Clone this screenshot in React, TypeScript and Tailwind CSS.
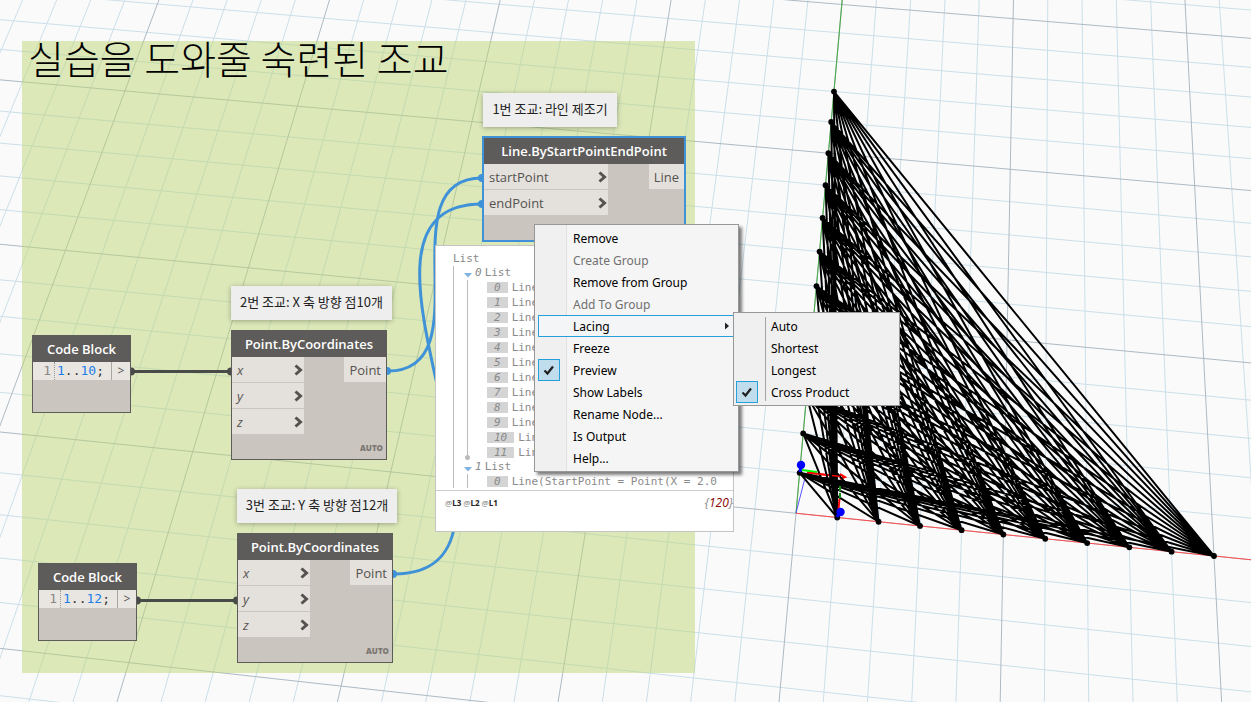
import type { ReactNode } from "react";

type Pt = [number, number];

/* ---------- 3D preview: ground plane projected into screen space ---------- */

function project(x: number, y: number): Pt {
  const w = 1 - 0.001547 * x + 0.01405 * y;
  return [
    (796 + 39.92 * x + 14.88 * y) / w,
    (513.3 + 3.41 * x - 33.86 * y) / w,
  ];
}

function range(from: number, to: number): number[] {
  return Array.from({ length: to - from + 1 }, (_, i) => from + i);
}

function segment(a: Pt, b: Pt): string {
  return `M${a[0].toFixed(2)} ${a[1].toFixed(2)}L${b[0].toFixed(2)} ${b[1].toFixed(2)}`;
}

const columns = range(-34, 18);
const rows = range(-12, 22);
const columnPath = (x: number) => segment(project(x, -12), project(x, 22));
const rowPath = (y: number) => segment(project(-34, y), project(18, y));

const minorGrid = [
  ...columns.filter((x) => x % 5 !== 0).map(columnPath),
  ...rows.filter((y) => y % 5 !== 0).map(rowPath),
].join("");
const majorGrid = [
  ...columns.filter((x) => x % 5 === 0).map(columnPath),
  ...rows.filter((y) => y % 5 === 0).map(rowPath),
].join("");

const startPoints = range(1, 10).map((x) => project(x, 0));
const endPoints = range(1, 12).map((y) => project(0, y));
const latticePath = startPoints
  .flatMap((a) => endPoints.map((b) => segment(a, b)))
  .join("");

function Scene() {
  return (
    <svg className="absolute inset-0 size-full" aria-hidden="true">
      <path d={minorGrid} stroke="#cbdfea" strokeWidth="1" fill="none" />
      <path d={majorGrid} stroke="#adbac3" strokeWidth="1" fill="none" />
      <path d={segment(project(0, 0), project(0, 22))} stroke="#4caa4c" strokeWidth="1.1" />
      <path d={segment(project(0, 0), project(18, 0))} stroke="#ff4d4d" strokeWidth="1.1" />
      <path d="M796 513L806 474" stroke="#5555ff" strokeWidth="1" />
      <path d="M807 472.5L841 476.5M840 474L845 477L840 479" stroke="#ff0000" strokeWidth="2" fill="none" />
      <path d={latticePath} stroke="#000" strokeWidth="2" fill="none" />
      {[...startPoints, ...endPoints].map(([x, y], i) => (
        <circle key={i} cx={x} cy={y} r="2.9" fill="#000" />
      ))}
      <path d="M802 470L817 472" stroke="#00ff00" strokeWidth="2.2" />
      <path d="M809 472.7L826 475M832 475.500L845 477" stroke="#ff0000" strokeWidth="1.4" strokeDasharray="8 2" />
      <path d="M840 486V498" stroke="#118811" strokeWidth="2" strokeDasharray="5 2" />
      <path d="M839.500 499L838.500 509" stroke="#ff0000" strokeWidth="2" />
      <path d="M801 465L800 472M840 512L837 517" stroke="#0000ff" strokeWidth="3" />
      <circle cx="801" cy="465" r="4.200" fill="#0000ff" />
      <circle cx="840.500" cy="512" r="4.200" fill="#0000ff" />
    </svg>
  );
}

/* ---------- Connectors ---------- */

function Wires() {
  return (
    <svg className="absolute inset-0 size-full" fill="none" aria-hidden="true">
      <g stroke="#484b48" strokeWidth="3">
        <path d="M131 371.500H231" />
        <path d="M137 600.500H237" />
      </g>
      <g fill="#484b48">
        <circle cx="131" cy="371.500" r="4" />
        <circle cx="231" cy="371.500" r="4" />
        <circle cx="137" cy="600.500" r="4" />
        <circle cx="237" cy="600.500" r="4" />
      </g>
      <g stroke="#4092d8" strokeWidth="3">
        <path d="M388 371C485 371 385 178 482 178" />
        <path d="M394 574C565 574 311 204 482 204" />
      </g>
      <g fill="#4092d8">
        <circle cx="387" cy="371" r="4" />
        <circle cx="482" cy="178" r="4" />
        <circle cx="393" cy="574" r="4" />
        <circle cx="482" cy="204" r="4" />
      </g>
    </svg>
  );
}

/* ---------- Nodes ---------- */

function Chevron() {
  return (
    <svg width="9" height="12" viewBox="0 0 9 12" fill="none" aria-hidden="true">
      <path d="M1.500 1.500L6.500 6L1.500 10.500" stroke="#555250" strokeWidth="3" />
    </svg>
  );
}

function NodeTitle({ children }: { children: ReactNode }) {
  return (
    <h2 className="flex h-[26px] items-center justify-center bg-[#5e5c5a] pt-[2px] text-[13px] font-semibold whitespace-nowrap text-white">
      {children}
    </h2>
  );
}

function Inputs({ names, italic }: { names: string[]; italic?: boolean }) {
  return (
    <ul className="flex flex-col gap-px">
      {names.map((name) => (
        <li
          key={name}
          className={`flex h-[25px] items-center justify-between bg-[#e4e1dc] pr-px pl-[5px] ${italic ? "w-[72px] italic" : "w-[124px]"}`}
        >
          <span className="pt-[2px]">{name}</span>
          <Chevron />
        </li>
      ))}
    </ul>
  );
}

function Output({ children }: { children: ReactNode }) {
  return (
    <span className="flex h-[25px] items-center bg-[#e4e1dc] px-[5px] pt-[2px]">{children}</span>
  );
}

function PointNode({ className }: { className: string }) {
  return (
    <section
      className={`absolute flex h-[130px] w-[156px] flex-col border border-[#5e5c5a] bg-[#cac5be] text-[13px] text-[#555250] ${className}`}
    >
      <NodeTitle>Point.ByCoordinates</NodeTitle>
      <div className="flex items-start justify-between">
        <Inputs names={["x", "y", "z"]} italic />
        <Output>Point</Output>
      </div>
      <span className="mt-auto pr-[3px] pb-1 text-right text-[8px] leading-[14px] font-extrabold text-[#7b7773]">
        AUTO
      </span>
    </section>
  );
}

function LineNode() {
  return (
    <section className="absolute top-[136px] left-[482px] h-[106px] w-[204px] border-2 border-[#4092d8] bg-[#cac5be] text-[13px] text-[#555250]">
      <NodeTitle>Line.ByStartPointEndPoint</NodeTitle>
      <div className="flex items-start justify-between">
        <Inputs names={["startPoint", "endPoint"]} />
        <Output>Line</Output>
      </div>
    </section>
  );
}

function CodeBlock({ className, end }: { className: string; end: string }) {
  return (
    <section
      className={`absolute h-[78px] w-[99px] border border-[#5e5c5a] bg-[#cac5be] ${className}`}
    >
      <NodeTitle>Code Block</NodeTitle>
      <div className="flex h-[18px] items-stretch bg-[#e9e6e2] font-['DejaVu_Sans_Mono',monospace] text-[13px] leading-[18px] text-[#333]">
        <span className="w-[22px] border-r border-dotted border-[#999] pr-[3px] text-right text-[#8a8784]">
          1
        </span>
        <code className="flex-1 pl-[2px] font-['DejaVu_Sans_Mono',monospace] whitespace-nowrap">
          <span className="text-[#2080e8]">1</span>..
          <span className="text-[#2080e8]">{end}</span>;
        </code>
        <span className="w-[19px] border-l border-[#aaa6a0] text-center font-['Open_Sans',sans-serif] text-[12px] text-[#555250]">
          &gt;
        </span>
      </div>
    </section>
  );
}

function Note({ className, children }: { className: string; children: ReactNode }) {
  return (
    <p
      className={`absolute flex h-[34px] items-center justify-center bg-[#eee] pb-[2px] font-['Noto_Sans_CJK_KR',sans-serif] text-[13px] whitespace-nowrap text-[#222] shadow-[0_1px_5px_rgba(0,0,0,0.3)] ${className}`}
    >
      {children}
    </p>
  );
}

/* ---------- Output preview ---------- */

function Caret() {
  return (
    <svg className="mt-1" width="8" height="5" viewBox="0 0 8 5" aria-hidden="true">
      <path d="M0 0H8L4 4.500Z" fill="#7fb2de" />
    </svg>
  );
}

function ListHead({ index }: { index: number }) {
  return (
    <div className="flex h-[14px] items-center gap-[3px]">
      <Caret />
      <span className="italic">{index}</span>
      <span>List</span>
    </div>
  );
}

function ListItem({ index, value }: { index: number; value: string }) {
  return (
    <li className="flex h-[15px] items-center gap-1">
      <span className="flex h-[11px] items-center bg-[#d4d4d4] px-[7px] italic">{index}</span>
      <span>{value}</span>
    </li>
  );
}

function OutputPreview() {
  return (
    <section className="absolute top-[245px] left-[435px] flex h-[287px] w-[299px] flex-col border border-[#c4c4c4] bg-white font-['DejaVu_Sans_Mono',monospace] text-[11px] leading-[14px] whitespace-nowrap text-[#8a8a8a]">
      <div className="h-[244px] overflow-hidden pt-[6px] pl-[17px]">
        <div className="h-[14px]">List</div>
        <div className="h-[222px] overflow-hidden border-l border-[#bbb] pl-[10px]">
          <ListHead index={0} />
          <ul className="relative ml-[3px] border-l border-[#bbb] pl-[19px]">
            {range(0, 11).map((i) => (
              <ListItem key={i} index={i} value="Line" />
            ))}
            <li className="absolute bottom-0 -left-[3px] size-[5px] rounded-full bg-[#bbb]" />
          </ul>
          <ListHead index={1} />
          <ul className="ml-[3px] border-l border-[#bbb] pl-[19px]">
            <ListItem index={0} value="Line(StartPoint = Point(X = 2.0" />
          </ul>
        </div>
      </div>
      <footer className="flex flex-1 items-start justify-between border-t border-[#ccc] pt-[5px] pl-[9px]">
        <div className="flex gap-[2px] font-['Open_Sans',sans-serif] text-[8px] leading-[14px] font-bold text-[#222]">
          {["L3", "L2", "L1"].map((level) => (
            <span key={level}>
              <span className="font-normal text-[#777]">@</span>
              {level}
            </span>
          ))}
        </div>
        <span className="font-['Open_Sans',sans-serif] text-[12px] italic">
          {"{"}
          <span className="text-[#8b0000]">120</span>
          {"}"}
        </span>
      </footer>
    </section>
  );
}

/* ---------- Context menus ---------- */

function CheckMark() {
  return (
    <span className="flex size-[22px] items-center justify-center border border-[#26a0da] bg-[#c0dded]">
      <svg width="12" height="11" viewBox="0 0 12 11" fill="none" aria-hidden="true">
        <path d="M1.500 5.500L4.500 8.500L10 1.500" stroke="#212121" strokeWidth="2.200" />
      </svg>
    </span>
  );
}

interface Entry {
  label: string;
  disabled?: boolean;
  checked?: boolean;
  submenu?: boolean;
}

const nodeMenu: Entry[] = [
  { label: "Remove" },
  { label: "Create Group", disabled: true },
  { label: "Remove from Group" },
  { label: "Add To Group", disabled: true },
  { label: "Lacing", submenu: true },
  { label: "Freeze" },
  { label: "Preview", checked: true },
  { label: "Show Labels" },
  { label: "Rename Node..." },
  { label: "Is Output" },
  { label: "Help..." },
];

const lacingMenu: Entry[] = [
  { label: "Auto" },
  { label: "Shortest" },
  { label: "Longest" },
  { label: "Cross Product", checked: true },
];

function MenuItem({ entry }: { entry: Entry }) {
  return (
    <li role="none">
      <button
        type="button"
        role={entry.checked ? "menuitemcheckbox" : "menuitem"}
        aria-checked={entry.checked}
        aria-haspopup={entry.submenu ? "menu" : undefined}
        disabled={entry.disabled}
        className={`flex h-[22px] w-full items-center text-left ${entry.disabled ? "text-[#707070]" : "text-black"} ${entry.submenu ? "bg-[#f4f5f6] outline-1 -outline-offset-1 outline-[#26a0da]" : ""}`}
      >
        <span className="w-[35px] shrink-0">{entry.checked && <CheckMark />}</span>
        <span className="flex-1 pt-[2px] leading-[20px]">{entry.label}</span>
        {entry.submenu && (
          <svg className="mr-1" width="5" height="8" viewBox="0 0 5 8" aria-hidden="true">
            <path d="M0 0.500L4 4L0 7.500Z" fill="#212121" />
          </svg>
        )}
      </button>
    </li>
  );
}

const menuFont = "font-['Noto_Sans',sans-serif] text-[12px] whitespace-nowrap";

export default function App() {
  return (
    <main className="relative h-screen w-full overflow-hidden bg-[#fafafa] font-['Open_Sans',sans-serif]">
      <Scene />

      <section className="absolute top-[41px] left-[22px] h-[632px] w-[673px] bg-[#bed676]/50">
        <h1 className="pl-[6px] font-['Noto_Sans_CJK_KR',sans-serif] text-[39px] leading-[32px] font-light whitespace-nowrap text-black">
          실습을 도와줄 숙련된 조교
        </h1>
      </section>

      <Wires />

      <Note className="top-[93px] left-[483px] w-[134px]">1번 조교: 라인 제조기</Note>
      <Note className="top-[286px] left-[231px] w-[161px]">2번 조교: X 축 방향 점10개</Note>
      <Note className="top-[489px] left-[237px] w-[160px]">3번 조교: Y 축 방향 점12개</Note>

      <CodeBlock className="top-[335px] left-[32px]" end="10" />
      <CodeBlock className="top-[563px] left-[38px]" end="12" />
      <PointNode className="top-[330px] left-[231px]" />
      <PointNode className="top-[533px] left-[237px]" />
      <LineNode />

      <OutputPreview />

      <ul
        role="menu"
        aria-label="Node"
        className={`absolute top-[224px] left-[534px] w-[205px] border border-[#979797] bg-[linear-gradient(to_right,#f0f0f0_31px,#e0e0e0_31px,#e0e0e0_32px,#f5f5f5_32px)] py-[2px] pr-[4px] pl-[3px] shadow-[3px_3px_3px_rgba(0,0,0,0.5)] ${menuFont}`}
      >
        {nodeMenu.map((entry) => (
          <MenuItem key={entry.label} entry={entry} />
        ))}
      </ul>

      <ul
        role="menu"
        aria-label="Lacing"
        className={`absolute top-[312px] left-[733px] w-[167px] border border-[#979797] bg-[#f0f0f0] p-[2px] ${menuFont}`}
      >
        {lacingMenu.map((entry) => (
          <MenuItem key={entry.label} entry={entry} />
        ))}
        <li role="separator" className="absolute inset-y-1 left-[31px] w-px bg-[#a5a5a5]" />
      </ul>
    </main>
  );
}
